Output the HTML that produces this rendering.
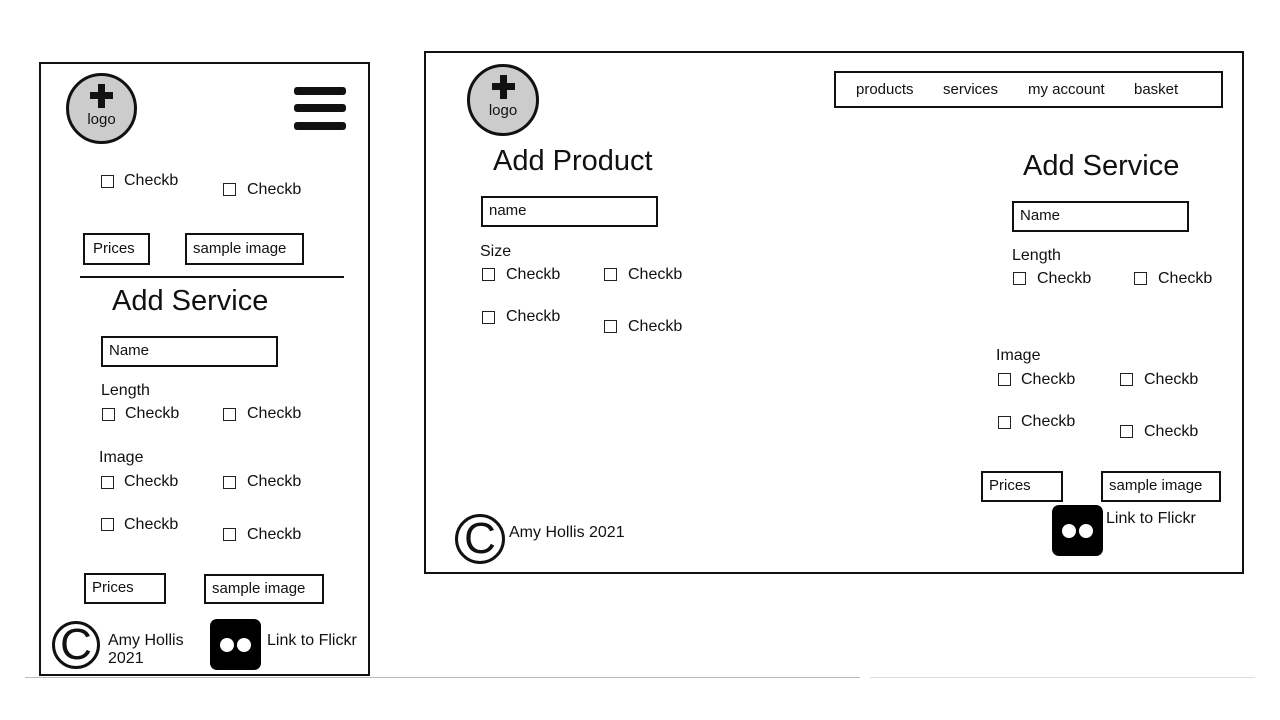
<!DOCTYPE html>
<html><head><style>
body{margin:0;width:1280px;height:720px;background:#fff;position:relative;overflow:hidden;font-family:"Liberation Sans",sans-serif;color:#111}
.a{position:absolute}
.fr{position:absolute;border:2.5px solid #111;box-sizing:border-box}
.t{position:absolute;font-size:16px;line-height:18px;white-space:nowrap}
.cb{position:absolute;width:13px;height:13px;border:1.5px solid #222;box-sizing:border-box}
.in{position:absolute;border:2.5px solid #111;box-sizing:border-box;font-size:15px;line-height:26px;padding-left:6px;white-space:nowrap}
.h{position:absolute;font-size:29px;line-height:32px;white-space:nowrap}
.logo{position:absolute;width:71px;height:71px;border-radius:50%;background:#ccc;border:3px solid #111;box-sizing:border-box}
.logo .v{position:absolute;left:29px;top:8px;width:7px;height:24px;background:#111}
.logo .hh{position:absolute;left:21px;top:16px;width:23px;height:7px;background:#111}
.logo span{position:absolute;left:0;right:0;top:35px;text-align:center;font-size:15px}
.fl{position:absolute;width:51px;height:51px;background:#000;border-radius:7px}
.fl i{position:absolute;top:19px;width:14px;height:14px;border-radius:50%;background:#fff}
.cp{position:absolute;width:48px;height:48px;border:3.5px solid #111;border-radius:50%;box-sizing:border-box;font-size:44px;line-height:42px;text-align:center}
</style></head><body>
<div class="a" style="left:25px;top:677px;width:835px;height:1px;background:#bbb"></div>
<div class="a" style="left:870px;top:677px;width:385px;height:1px;background:#ddd"></div>

<!-- Mobile -->
<div class="fr" style="left:39px;top:62px;width:331px;height:614px"></div>
<div class="logo" style="left:66px;top:73px"><div class="v"></div><div class="hh"></div><span>logo</span></div>
<div class="a" style="left:294px;top:87px;width:52px;height:8px;background:#111;border-radius:3px"></div>
<div class="a" style="left:294px;top:104px;width:52px;height:8px;background:#111;border-radius:3px"></div>
<div class="a" style="left:294px;top:122px;width:52px;height:8px;background:#111;border-radius:3px"></div>
<div class="cb" style="left:101px;top:175px"></div><div class="t" style="left:124px;top:172px">Checkb</div>
<div class="cb" style="left:223px;top:183px"></div><div class="t" style="left:247px;top:181px">Checkb</div>
<div class="in" style="left:83px;top:233px;width:67px;height:32px;padding-left:8px;line-height:27px">Prices</div>
<div class="in" style="left:185px;top:233px;width:119px;height:32px;padding-left:6px;line-height:27px">sample image</div>
<div class="a" style="left:80px;top:276px;width:264px;height:2px;background:#111"></div>
<div class="h" style="left:112px;top:285px">Add Service</div>
<div class="in" style="left:101px;top:336px;width:177px;height:31px">Name</div>
<div class="t" style="left:101px;top:382px">Length</div>
<div class="cb" style="left:102px;top:408px"></div><div class="t" style="left:125px;top:405px">Checkb</div>
<div class="cb" style="left:223px;top:408px"></div><div class="t" style="left:247px;top:405px">Checkb</div>
<div class="t" style="left:99px;top:449px">Image</div>
<div class="cb" style="left:101px;top:476px"></div><div class="t" style="left:124px;top:473px">Checkb</div>
<div class="cb" style="left:223px;top:476px"></div><div class="t" style="left:247px;top:473px">Checkb</div>
<div class="cb" style="left:101px;top:518px"></div><div class="t" style="left:124px;top:516px">Checkb</div>
<div class="cb" style="left:223px;top:528px"></div><div class="t" style="left:247px;top:526px">Checkb</div>
<div class="in" style="left:84px;top:573px;width:82px;height:31px">Prices</div>
<div class="in" style="left:204px;top:574px;width:120px;height:30px;line-height:25px">sample image</div>
<div class="cp" style="left:52px;top:621px">C</div>
<div class="t" style="left:108px;top:632px;line-height:18px">Amy Hollis<br>2021</div>
<div class="fl" style="left:210px;top:619px"><i style="left:10px"></i><i style="left:27px"></i></div>
<div class="t" style="left:267px;top:632px">Link to Flickr</div>

<!-- Desktop -->
<div class="fr" style="left:424px;top:51px;width:820px;height:523px"></div>
<div class="logo" style="left:467px;top:64px;width:72px;height:72px"><div class="v" style="left:30px"></div><div class="hh" style="left:22px"></div><span>logo</span></div>
<div class="in" style="left:834px;top:71px;width:389px;height:37px"></div>
<div class="t" style="left:856px;top:81px;font-size:15px">products</div>
<div class="t" style="left:943px;top:81px;font-size:15px">services</div>
<div class="t" style="left:1028px;top:81px;font-size:15px">my account</div>
<div class="t" style="left:1134px;top:81px;font-size:15px">basket</div>
<div class="h" style="left:493px;top:145px">Add Product</div>
<div class="in" style="left:481px;top:196px;width:177px;height:31px">name</div>
<div class="t" style="left:480px;top:243px">Size</div>
<div class="cb" style="left:482px;top:268px"></div><div class="t" style="left:506px;top:266px">Checkb</div>
<div class="cb" style="left:604px;top:268px"></div><div class="t" style="left:628px;top:266px">Checkb</div>
<div class="cb" style="left:482px;top:311px"></div><div class="t" style="left:506px;top:308px">Checkb</div>
<div class="cb" style="left:604px;top:320px"></div><div class="t" style="left:628px;top:318px">Checkb</div>
<div class="cp" style="left:455px;top:514px;width:50px;height:50px;line-height:44px">C</div>
<div class="t" style="left:509px;top:524px">Amy Hollis 2021</div>

<div class="h" style="left:1023px;top:150px">Add Service</div>
<div class="in" style="left:1012px;top:201px;width:177px;height:31px">Name</div>
<div class="t" style="left:1012px;top:247px">Length</div>
<div class="cb" style="left:1013px;top:272px"></div><div class="t" style="left:1037px;top:270px">Checkb</div>
<div class="cb" style="left:1134px;top:272px"></div><div class="t" style="left:1158px;top:270px">Checkb</div>
<div class="t" style="left:996px;top:347px">Image</div>
<div class="cb" style="left:998px;top:373px"></div><div class="t" style="left:1021px;top:371px">Checkb</div>
<div class="cb" style="left:1120px;top:373px"></div><div class="t" style="left:1144px;top:371px">Checkb</div>
<div class="cb" style="left:998px;top:416px"></div><div class="t" style="left:1021px;top:413px">Checkb</div>
<div class="cb" style="left:1120px;top:425px"></div><div class="t" style="left:1144px;top:423px">Checkb</div>
<div class="in" style="left:981px;top:471px;width:82px;height:31px">Prices</div>
<div class="in" style="left:1101px;top:471px;width:120px;height:31px">sample image</div>
<div class="fl" style="left:1052px;top:505px"><i style="left:10px"></i><i style="left:27px"></i></div>
<div class="t" style="left:1106px;top:510px">Link to Flickr</div>
</body></html>
